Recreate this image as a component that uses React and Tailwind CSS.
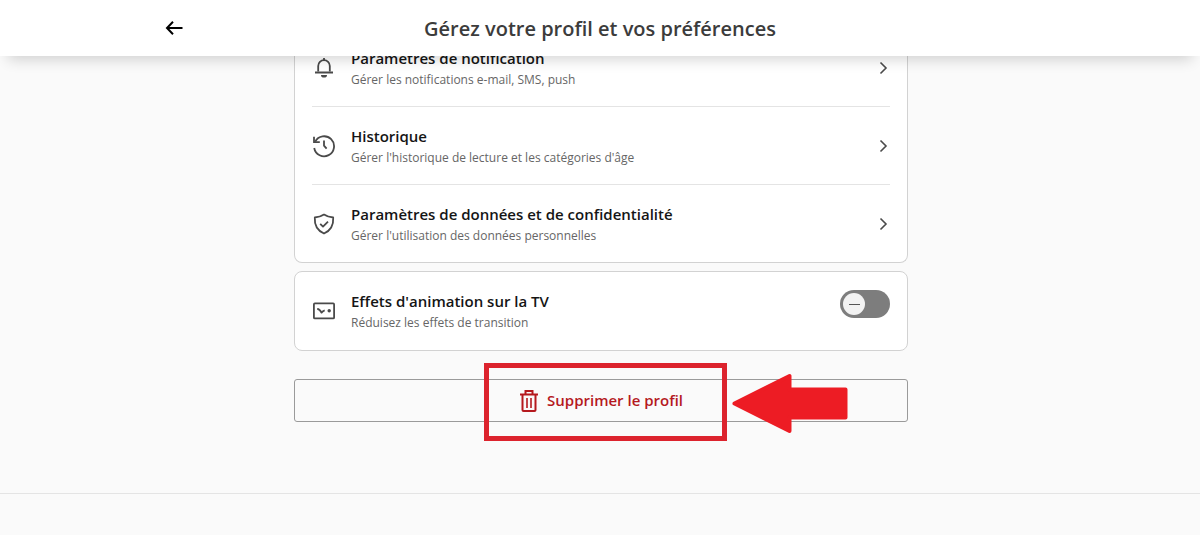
import { useState } from 'react'

const iconProps = {
  viewBox: '0 0 24 24',
  fill: 'none',
  stroke: 'currentColor',
  strokeWidth: 1.8,
  'aria-hidden': true,
}

const BellIcon = () => (
  <svg {...iconProps} className="h-6 w-6 shrink-0 text-[#4a4a4a]">
    <path d="M6.200 15.500V10a5.800 5.800 0 0 1 11.600 0v5.500" />
    <path d="M3 16.500h18M12 2v2.200" />
    <path d="M9 19h6a3 2.600 0 0 1-6 0z" fill="currentColor" stroke="none" />
  </svg>
)

const HistoryIcon = () => (
  <svg {...iconProps} className="h-6 w-6 shrink-0 text-[#4a4a4a]">
    <path d="M3.200 7.600A10 10 0 1 1 2.200 14" />
    <path d="M2 2.800v5.400h5.800" />
    <path d="M12 6.500v5.200l2.600 3" />
  </svg>
)

const ShieldIcon = () => (
  <svg {...iconProps} className="h-6 w-6 shrink-0 text-[#4a4a4a]" strokeLinejoin="round">
    <path d="M12 2.600c2.800 1.900 5.600 2.700 9.200 2.900.5 7.800-2.400 13-9.200 16-6.800-3-9.700-8.200-9.200-16C6.400 5.300 9.200 4.500 12 2.600z" />
    <path d="M8.200 11.800l2.800 2.800 5-5" />
  </svg>
)

const TvIcon = () => (
  <svg {...iconProps} className="h-6 w-6 shrink-0 text-[#4a4a4a]" strokeLinejoin="round">
    <rect x="1.900" y="4.400" width="20.200" height="15" rx="1" />
    <path d="M5.200 9.800c2.300.2 3.200 1.400 4.300 3.800 1-1.300 1.900-2 3.200-2.300" />
    <circle cx="17.200" cy="11.800" r="1.700" fill="currentColor" stroke="none" />
  </svg>
)

const ChevronIcon = () => (
  <svg viewBox="0 0 14 14" fill="none" stroke="currentColor" strokeWidth="1.600" aria-hidden="true" className="h-3.5 w-3.5 shrink-0 text-[#4a4a4a]">
    <path d="M4.500 1.500l5.500 5.500-5.500 5.500" />
  </svg>
)

const TrashIcon = () => (
  <svg viewBox="0 0 20 24" fill="none" stroke="currentColor" strokeWidth="2" aria-hidden="true" className="h-6 w-5 shrink-0">
    <path d="M1 5.500h18M6.500 5V2h7v3" />
    <path d="M3.500 5.500V21a1 1 0 0 0 1 1h11a1 1 0 0 0 1-1V5.500" />
    <path d="M8 9v10M12 9v10" strokeWidth="1.600" />
  </svg>
)

const SETTINGS = [
  { title: 'Paramètres de notification', text: 'Gérer les notifications e-mail, SMS, push', icon: BellIcon },
  { title: 'Historique', text: "Gérer l'historique de lecture et les catégories d'âge", icon: HistoryIcon },
  { title: 'Paramètres de données et de confidentialité', text: "Gérer l'utilisation des données personnelles", icon: ShieldIcon },
]

function RowText({ title, text }) {
  return (
    <span className="flex flex-1 flex-col pt-0.5">
      <span className="text-[15px] leading-[22px] font-semibold text-[#151515]">{title}</span>
      <span className="text-xs leading-[22px] text-[#666]">{text}</span>
    </span>
  )
}

function SettingRow({ title, text, icon: Icon }) {
  return (
    <li className="border-b border-[#e4e4e4] last:border-0">
      <a href="#" className="flex items-center gap-[15px] pt-4 pb-[15px]">
        <Icon />
        <RowText title={title} text={text} />
        <ChevronIcon />
      </a>
    </li>
  )
}

function Toggle({ id, checked, onChange }) {
  return (
    <span className="relative mb-3.5 flex">
      <input
        id={id}
        type="checkbox"
        role="switch"
        checked={checked}
        onChange={(e) => onChange(e.target.checked)}
        className="peer h-7 w-[50px] cursor-pointer appearance-none rounded-full bg-[#7d7d7d] checked:bg-[#2b7a3d]"
      />
      <span className="pointer-events-none absolute top-[3px] left-[3px] flex h-[22px] w-[22px] items-center justify-center rounded-full bg-[#f2f2f2] peer-checked:left-[25px]">
        <span className="h-px w-[11px] bg-[#555]" />
      </span>
    </span>
  )
}

export default function App() {
  const [animations, setAnimations] = useState(false)

  return (
    <div className="min-h-screen bg-[#fafafa] font-['Open_Sans','Noto_Sans',sans-serif]">
      <header className="sticky top-0 z-10 h-14 bg-white shadow-[0_12px_14px_-8px_rgba(0,0,0,0.16)]">
        <div className="mx-auto grid h-full max-w-[870px] grid-cols-[1fr_auto_1fr] items-center">
          <button type="button" aria-label="Retour" className="justify-self-start text-black">
            <svg viewBox="0 0 18 16" fill="none" stroke="currentColor" strokeWidth="2" aria-hidden="true" className="h-4 w-[18px]">
              <path d="M17.500 8H2M8 1.800L2 8l6 6.200" />
            </svg>
          </button>
          <h1 className="pt-0.5 text-xl font-semibold text-[#3c3c3c]">Gérez votre profil et vos préférences</h1>
        </div>
      </header>

      <main className="mx-auto -mt-[27px] max-w-[616px] pl-0.5">
        <ul className="rounded-lg border border-t-0 border-[#d2d2d2] bg-white px-[17px]">
          {SETTINGS.map((s) => (
            <SettingRow key={s.title} {...s} />
          ))}
        </ul>

        <div className="mt-2 flex items-center rounded-lg border border-[#d2d2d2] bg-white px-[17px] pt-4 pb-4">
          <label htmlFor="tv-effects" className="flex flex-1 items-center gap-[15px]">
            <TvIcon />
            <RowText title="Effets d'animation sur la TV" text="Réduisez les effets de transition" />
          </label>
          <Toggle id="tv-effects" checked={animations} onChange={setAnimations} />
        </div>

        <div className="relative mt-7">
          <button
            type="button"
            className="flex h-[43px] w-full items-center justify-center gap-2 rounded-[3px] border border-[#9a9a9a] text-[15px] font-semibold text-[#b5191e]"
          >
            <TrashIcon />
            Supprimer le profil
          </button>
          {/* highlight frame and pointer */}
          <div className="pointer-events-none absolute -top-4 left-[190px] h-[78px] w-[243px] border-[5px] border-[#dc232d]" />
          <svg viewBox="0 0 116 62" aria-hidden="true" className="pointer-events-none absolute -top-1.5 left-[438px] h-[62px] w-[116px]">
            <path
              d="M2.500 30.500L57.500 3V16.500H113.500V44.500H57.500V58z"
              fill="#ed1c24"
              stroke="#ed1c24"
              strokeWidth="4"
              strokeLinejoin="round"
            />
          </svg>
        </div>
      </main>

      <footer className="mt-[71px] border-t border-[#e4e4e4]" />
    </div>
  )
}
